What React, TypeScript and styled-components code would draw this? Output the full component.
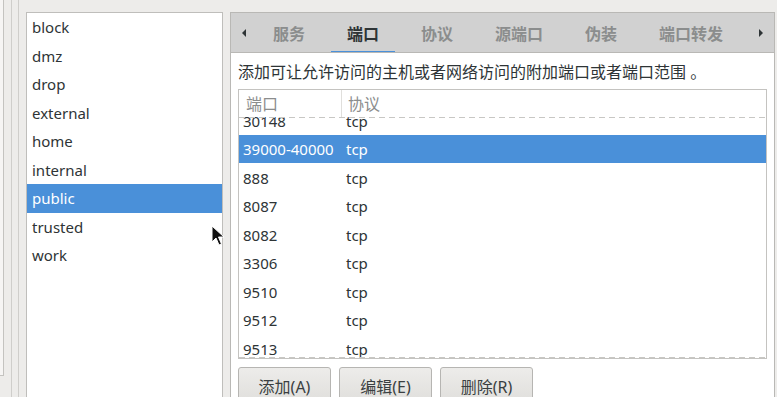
import React from "react";
import styled, { createGlobalStyle, css } from "styled-components";

const GlobalStyle = createGlobalStyle`
  html, body { margin: 0; padding: 0; }
  body {
    background: #edecea;
    font-family: "Noto Sans", "Noto Sans CJK SC", sans-serif;
    color: #2e3436;
  }
  * { box-sizing: border-box; }
`;

const Page = styled.div`
  position: relative;
  width: 777px;
  height: 397px;
  overflow: hidden;
  display: flex;
  align-items: flex-start;
  background: #edecea;
`;

const LeftStub = styled.div`
  width: 4px;
  height: 376px;
  background: #f6f5f4;
  border-right: 1px solid #c4c3c0;
  border-bottom: 1px solid #c4c3c0;
  flex: none;
`;

const PaneHandle = styled.div`
  width: 8px;
  height: 397px;
  margin-left: 7px;
  border-left: 1px solid #cfcecb;
  border-right: 1px solid #cfcecb;
  flex: none;
`;

const ZoneList = styled.div`
  width: 197px;
  height: 400px;
  margin-top: 12px;
  margin-left: 7px;
  background: #ffffff;
  border: 1px solid #bfbebb;
  flex: none;
`;

const ZoneItem = styled.div<{ $selected?: boolean }>`
  height: 28.5px;
  line-height: 28.5px;
  padding-left: 5px;
  font-size: 15px;
  color: #2e3436;
  ${(p) =>
    p.$selected &&
    css`
      background: #4a90d9;
      color: #ffffff;
    `}
`;

const Notebook = styled.div`
  width: 545px;
  height: 400px;
  margin-top: 12px;
  margin-left: 7px;
  border: 1px solid #b9b8b5;
  background: #ffffff;
  display: flex;
  flex-direction: column;
  flex: none;
`;

const TabBar = styled.div`
  height: 40px;
  background: #d1d1d1;
  border-bottom: 1px solid #b9b8b5;
  display: flex;
  align-items: stretch;
`;

const ArrowButton = styled.div<{ $dir: "left" | "right" }>`
  width: 26px;
  flex: none;
  display: flex;
  align-items: center;
  justify-content: center;
  padding-top: 1px;
  &::before {
    content: "";
    width: 0;
    height: 0;
    border-top: 4px solid transparent;
    border-bottom: 4px solid transparent;
    ${(p) =>
      p.$dir === "left"
        ? css`border-right: 4px solid #2e3436;`
        : css`border-left: 4px solid #2e3436;`}
  }
`;

const TabStrip = styled.div`
  flex: 1;
  display: flex;
  gap: 10px;
  overflow: hidden;
`;

const Tab = styled.div<{ $active?: boolean }>`
  padding: 0 16px;
  display: flex;
  align-items: center;
  font-size: 16px;
  font-weight: 700;
  white-space: nowrap;
  color: ${(p) => (p.$active ? "#2e3436" : "#8b8d8d")};
  box-shadow: ${(p) => (p.$active ? "inset 0 -2px 0 #4a90d9" : "none")};
  margin-bottom: -1px;
`;

const Content = styled.div`
  padding: 9px 7px 0 7px;
  display: flex;
  flex-direction: column;
`;

const Description = styled.div`
  font-size: 16px;
  line-height: 20px;
  height: 20px;
  color: #2e3436;
  white-space: nowrap;
`;

const Table = styled.div`
  margin-top: 7px;
  height: 270px;
  border: 1px solid #c4c3c0;
  display: flex;
  flex-direction: column;
  overflow: hidden;
`;

const HeaderRow = styled.div`
  height: 27px;
  display: flex;
  flex: none;
`;

const HeaderCell = styled.div<{ $width?: number; $pad: number }>`
  ${(p) => (p.$width ? css`width: ${p.$width}px;` : css`flex: 1;`)}
  padding-left: ${(p) => p.$pad}px;
  padding-bottom: 2px;
  display: flex;
  align-items: center;
  font-size: 16px;
  color: #8b8d8d;
  ${(p) => p.$width && css`border-right: 1px solid #e0dfdc;`}
`;

const Body = styled.div`
  position: relative;
  flex: 1;
  overflow: hidden;
  &::before,
  &::after {
    content: "";
    position: absolute;
    left: 0;
    right: 0;
    height: 1px;
    background: repeating-linear-gradient(
      to right,
      #c8c7c4 0,
      #c8c7c4 6px,
      transparent 6px,
      transparent 10px
    );
    z-index: 2;
  }
  &::before { top: 0; }
  &::after { bottom: 0; }
`;

const Rows = styled.div`
  margin-top: -10.75px;
`;

const Row = styled.div<{ $selected?: boolean }>`
  height: 28.5px;
  display: flex;
  align-items: center;
  font-size: 15px;
  color: #2e3436;
  ${(p) =>
    p.$selected &&
    css`
      background: #4a90d9;
      color: #ffffff;
    `}
`;

const Cell = styled.div<{ $width?: number }>`
  ${(p) => (p.$width ? css`width: ${p.$width}px;` : css`flex: 1;`)}
  padding-left: 4px;
  white-space: nowrap;
`;

const ButtonRow = styled.div`
  margin-top: 8px;
  display: flex;
  gap: 8px;
`;

const Button = styled.div`
  width: 93px;
  height: 36px;
  border: 1px solid #b6b5b2;
  border-radius: 3px;
  background: linear-gradient(#edecea, #e0dfdc);
  display: flex;
  align-items: center;
  justify-content: center;
  padding-top: 2px;
  font-size: 16px;
  color: #3a3f41;
`;

const Cursor = styled.svg`
  position: absolute;
  left: 211px;
  top: 225px;
  width: 14px;
  height: 22px;
`;

const zones = ["block", "dmz", "drop", "external", "home", "internal", "public", "trusted", "work"];
const tabs = ["服务", "端口", "协议", "源端口", "伪装", "端口转发"];
const ports: [string, string][] = [
  ["30148", "tcp"],
  ["39000-40000", "tcp"],
  ["888", "tcp"],
  ["8087", "tcp"],
  ["8082", "tcp"],
  ["3306", "tcp"],
  ["9510", "tcp"],
  ["9512", "tcp"],
  ["9513", "tcp"],
];

export default function App() {
  return (
    <>
      <GlobalStyle />
      <Page>
        <LeftStub />
        <PaneHandle />
        <ZoneList>
          {zones.map((z) => (
            <ZoneItem key={z} $selected={z === "public"}>
              {z}
            </ZoneItem>
          ))}
        </ZoneList>
        <Notebook>
          <TabBar>
            <ArrowButton $dir="left" />
            <TabStrip>
              {tabs.map((t) => (
                <Tab key={t} $active={t === "端口"}>
                  {t}
                </Tab>
              ))}
            </TabStrip>
            <ArrowButton $dir="right" />
          </TabBar>
          <Content>
            <Description>添加可让允许访问的主机或者网络访问的附加端口或者端口范围 。</Description>
            <Table>
              <HeaderRow>
                <HeaderCell $width={103} $pad={7}>端口</HeaderCell>
                <HeaderCell $pad={6}>协议</HeaderCell>
              </HeaderRow>
              <Body>
                <Rows>
                  {ports.map(([p, proto]) => (
                    <Row key={p} $selected={p === "39000-40000"}>
                      <Cell $width={103}>{p}</Cell>
                      <Cell>{proto}</Cell>
                    </Row>
                  ))}
                </Rows>
              </Body>
            </Table>
            <ButtonRow>
              <Button>添加(A)</Button>
              <Button>编辑(E)</Button>
              <Button>删除(R)</Button>
            </ButtonRow>
          </Content>
        </Notebook>
        <Cursor viewBox="0 0 14 22">
          <path d="M1 1 L1 17 L5 13 L8 20 L10.5 19 L7.5 12 L13 12 Z" fill="#111" stroke="#fff" strokeWidth="1" strokeLinejoin="round" />
        </Cursor>
      </Page>
    </>
  );
}
